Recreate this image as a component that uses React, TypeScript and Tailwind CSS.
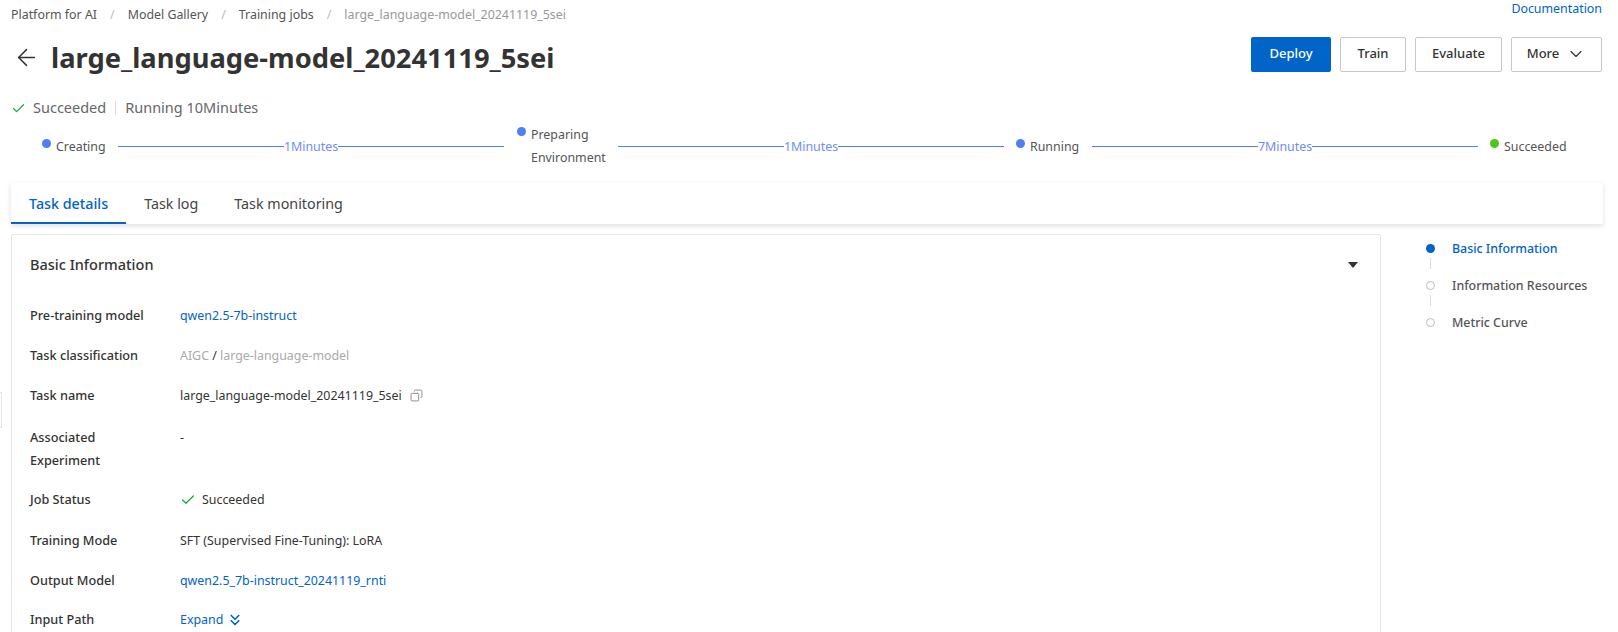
import React from 'react';
import { ArrowLeft, Check, ChevronDown, ChevronsDown, Copy } from 'lucide-react';

const steps = [
  { lines: ['Creating'], dot: 'bg-[#4f7ff5]', box: 'w-[76px] pl-[14px]', dotLeft: 'left-0', time: '1Minutes' },
  { lines: ['Preparing', 'Environment'], dot: 'bg-[#4f7ff5]', box: 'w-[114px] pl-[27px]', dotLeft: 'left-[13px]', time: '1Minutes' },
  { lines: ['Running'], dot: 'bg-[#4f7ff5]', box: 'w-[88px] pl-[26px]', dotLeft: 'left-[12px]', time: '7Minutes' },
  { lines: ['Succeeded'], dot: 'bg-[#52c41a]', box: 'w-[89px] pl-[26px]', dotLeft: 'left-[12px]', time: '' },
];

function Row({ label, h, children }: { label: React.ReactNode; h: string; children: React.ReactNode }) {
  return (
    <div className={`flex items-start ${h}`}>
      <div className="w-[150px] text-[12.7px] leading-[23px] font-medium text-[#333]">{label}</div>
      <div className="leading-[23px] text-[#333]">{children}</div>
    </div>
  );
}

export default function App() {
  return (
    <div className="relative h-[632px] overflow-hidden bg-white text-[12.4px] text-[#333] font-['Noto_Sans',sans-serif]">
      <div className="absolute left-0 top-[392px] h-[36px] w-[2px] border border-l-0 border-[#e5e5e5]" />

      <div className="flex h-[30px] items-start justify-between pl-[11px] pr-[16px] pt-[4px]">
        <div className="flex items-center leading-[22px] text-[#555]">
          <span>Platform for AI</span>
          <span className="mx-[13px] text-[#bbb]">/</span>
          <span>Model Gallery</span>
          <span className="mx-[13px] text-[#bbb]">/</span>
          <span>Training jobs</span>
          <span className="mx-[13px] text-[#bbb]">/</span>
          <span className="text-[#999]">large_language-model_20241119_5sei</span>
        </div>
        <a className="-mt-[4px] leading-[18px] text-[#0064c8]">Documentation</a>
      </div>

      <div className="flex h-[48px] items-center justify-between pl-[13px] pr-[16px]">
        <div className="flex items-center pt-[7px]">
          <ArrowLeft className="h-[27px] w-[27px] text-[#333]" strokeWidth={1.3} />
          <h1 className="ml-[11px] text-[27.3px] leading-[36px] font-bold text-[#333]">large_language-model_20241119_5sei</h1>
        </div>
        <div className="flex gap-[9px] text-[13px] font-medium">
          <button className="h-[35px] w-[80px] rounded-[2px] bg-[#0064c8] text-white">Deploy</button>
          <button className="h-[35px] w-[66px] rounded-[2px] border border-[#c8c8c8]">Train</button>
          <button className="h-[35px] w-[87px] rounded-[2px] border border-[#c8c8c8]">Evaluate</button>
          <button className="flex h-[35px] w-[91px] items-center justify-center gap-[7px] rounded-[2px] border border-[#c8c8c8]">
            More
            <ChevronDown className="h-[20px] w-[20px]" strokeWidth={1.4} />
          </button>
        </div>
      </div>

      <div className="mt-[17px] flex h-[26px] items-center pl-[11px] text-[14.5px] text-[#666]">
        <Check className="h-[15px] w-[15px] text-[#1eaa3c]" strokeWidth={2} />
        <span className="ml-[7px]">Succeeded</span>
        <span className="mx-[9px] h-[14px] w-px bg-[#ddd]" />
        <span>Running 10Minutes</span>
      </div>

      <div className="mt-[2px] flex h-[46px] items-center pl-[42px] pr-[51px]">
        {steps.map((s) => (
          <React.Fragment key={s.lines[0]}>
            <div className={`relative shrink-0 ${s.box}`}>
              <span className={`absolute top-[4px] h-[9px] w-[9px] rounded-full ${s.dotLeft} ${s.dot}`} />
              {s.lines.map((l) => (
                <div key={l} className="leading-[23px] text-[#555]">{l}</div>
              ))}
            </div>
            {s.time && (
              <div className="flex flex-1 items-center">
                <span className="h-px flex-1 bg-[#4f7ff5]" />
                <span className="leading-[23px] text-[#6d8ff8]">{s.time}</span>
                <span className="h-px flex-1 bg-[#4f7ff5]" />
              </div>
            )}
          </React.Fragment>
        ))}
      </div>

      <div className="relative ml-[11px] mr-[15px] mt-[14px] flex h-[41px] items-center gap-[36px] pl-[18px] text-[14.3px] shadow-[0_2px_5px_rgba(0,0,0,0.13)]">
        <span className="font-medium text-[#0064c8]">Task details</span>
        <span className="absolute bottom-0 left-0 h-[2px] w-[115px] bg-[#0064c8]" />
        <span className="text-[#444]">Task log</span>
        <span className="text-[#444]">Task monitoring</span>
      </div>

      <div className="mt-[10px] flex">
        <div className="ml-[11px] h-[500px] w-[1370px] shrink-0 rounded-[2px] border border-[#e5e5e5] px-[18px] pt-[19px]">
          <div className="flex h-[22px] items-center justify-between pr-[4px]">
            <span className="text-[14.5px] font-medium text-[#333]">Basic Information</span>
            <span className="h-0 w-0 border-x-[5px] border-t-[6px] border-x-transparent border-t-[#333]" />
          </div>
          <div className="mt-[28px]">
            <Row label="Pre-training model" h="h-[40px]">
              <span className="text-[#0064c8]">qwen2.5-7b-instruct</span>
            </Row>
            <Row label="Task classification" h="h-[40px]">
              <span className="text-[#aaa]">AIGC</span> / <span className="text-[#aaa]">large-language-model</span>
            </Row>
            <Row label="Task name" h="h-[42px]">
              <span className="flex items-center">
                large_language-model_20241119_5sei
                <Copy className="ml-[8px] h-[13px] w-[13px] -scale-x-100 text-[#777]" strokeWidth={1.5} />
              </span>
            </Row>
            <Row label={<>Associated<br />Experiment</>} h="h-[62px]">
              -
            </Row>
            <Row label="Job Status" h="h-[41px]">
              <span className="flex items-center">
                <Check className="h-[16px] w-[16px] text-[#1eaa3c]" strokeWidth={2} />
                <span className="ml-[6px]">Succeeded</span>
              </span>
            </Row>
            <Row label="Training Mode" h="h-[40px]">
              SFT (Supervised Fine-Tuning): LoRA
            </Row>
            <Row label="Output Model" h="h-[39px]">
              <span className="text-[#0064c8]">qwen2.5_7b-instruct_20241119_rnti</span>
            </Row>
            <Row label="Input Path" h="h-[40px]">
              <span className="flex items-center text-[#0064c8]">
                Expand
                <ChevronsDown className="ml-[3px] h-[18px] w-[18px]" strokeWidth={2.2} />
              </span>
            </Row>
          </div>
        </div>

        <div className="ml-[45px] pt-[3px] font-medium">
          <div className="relative flex h-[37px] items-start pl-[26px] text-[#0064c8]">
            <span className="absolute left-[0px] top-[7px] h-[9px] w-[9px] rounded-full bg-[#0064c8]" />
            <span className="absolute left-[4px] top-[21px] h-[11px] w-px bg-[#ddd]" />
            <span className="leading-[23px]">Basic Information</span>
          </div>
          <div className="relative flex h-[37px] items-start pl-[26px] text-[#555]">
            <span className="absolute left-[0px] top-[7px] h-[9px] w-[9px] rounded-full border border-[#bbb]" />
            <span className="absolute left-[4px] top-[21px] h-[11px] w-px bg-[#ddd]" />
            <span className="leading-[23px]">Information Resources</span>
          </div>
          <div className="relative flex h-[37px] items-start pl-[26px] text-[#555]">
            <span className="absolute left-[0px] top-[7px] h-[9px] w-[9px] rounded-full border border-[#bbb]" />
            <span className="leading-[23px]">Metric Curve</span>
          </div>
        </div>
      </div>
    </div>
  );
}
